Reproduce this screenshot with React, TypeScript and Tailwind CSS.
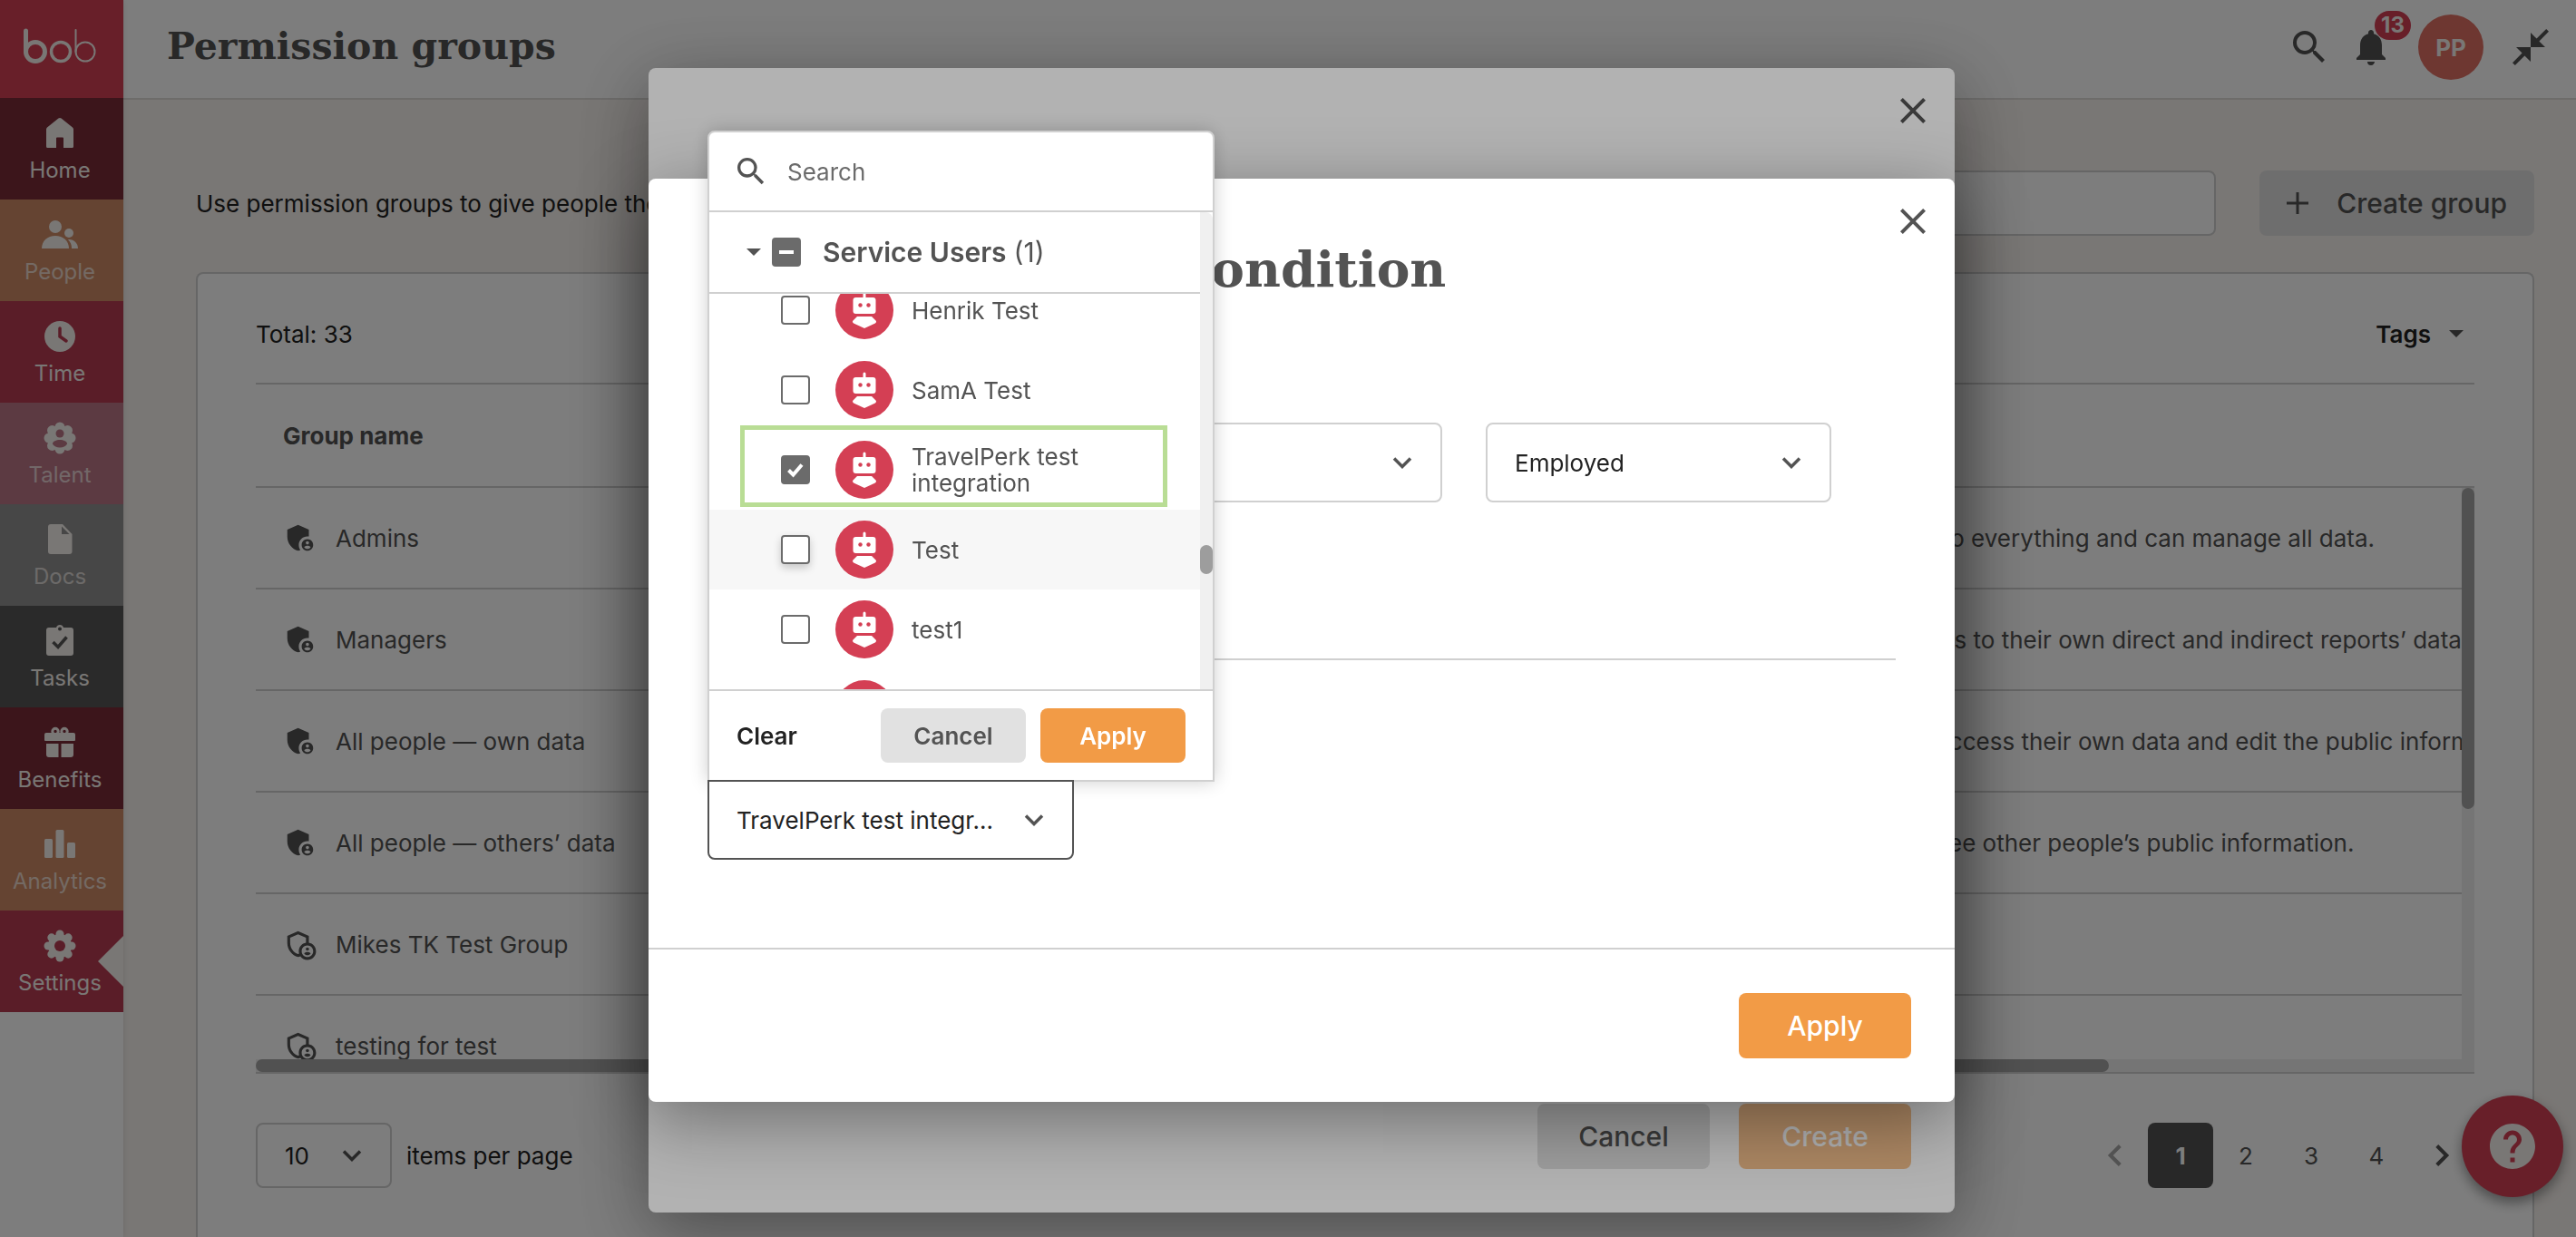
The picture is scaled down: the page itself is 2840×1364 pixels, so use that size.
import { useState } from "react";
import type { ReactNode } from "react";
import clsx from "clsx";
import {
  MdAdminPanelSettings,
  MdClose,
  MdCloseFullscreen,
  MdHelp,
  MdNotifications,
  MdOutlineAdminPanelSettings,
  MdSearch,
} from "react-icons/md";

type NavItem = {
  label: string;
  tile: string;
  muted?: boolean;
  active?: boolean;
  icon: ReactNode;
};

const petals = [0, 45, 90, 135, 180, 225, 270, 315];

const navItems: NavItem[] = [
  {
    label: "Home",
    tile: "bg-[#7a2b38]",
    icon: (
      <path d="M20 2c-.6 0-1.100.2-1.600.6L6 12.500c-.6.5-1 1.200-1 2V33.500A1.500 1.500 0 0 0 6.500 35H16V24.500a1 1 0 0 1 1-1h6a1 1 0 0 1 1 1V35h9.500a1.500 1.500 0 0 0 1.500-1.500V14.500c0-.8-.4-1.500-1-2L21.600 2.600C21.100 2.200 20.600 2 20 2z" />
    ),
  },
  {
    label: "People",
    tile: "bg-[#ce8b66]",
    muted: true,
    icon: (
      <>
        <circle cx="15" cy="10" r="7" />
        <circle cx="30" cy="17" r="5" />
        <path d="M0 34c0-8.500 6.500-14 15-14s15 5.500 15 14z" />
        <path d="M30 24c6 0 10 4.500 10 10h-7c0-4-1-7-4-9.800z" />
      </>
    ),
  },
  {
    label: "Time",
    tile: "bg-[#b83b52]",
    icon: (
      <>
        <circle cx="20" cy="19" r="17" />
        <path d="M20 10v9l7 5" fill="none" stroke="#b83b52" strokeWidth="3.500" strokeLinecap="round" />
      </>
    ),
  },
  {
    label: "Talent",
    tile: "bg-[#bc7687]",
    muted: true,
    icon: (
      <>
        <circle cx="20" cy="19" r="14" />
        {petals.map((a) => (
          <circle key={a} cx="20" cy="7" r="5.500" transform={`rotate(${a} 20 19)`} />
        ))}
        <circle cx="20" cy="14" r="4.500" fill="#bc7687" />
        <path d="M12 25.500c0-3 4-4.500 8-4.500s8 1.500 8 4.500c-1.500 2.500-4.500 4-8 4s-6.500-1.500-8-4z" fill="#bc7687" />
      </>
    ),
  },
  {
    label: "Docs",
    tile: "bg-[#919191]",
    muted: true,
    icon: (
      <>
        <path d="M10 2h13l10.500 11v19a3 3 0 0 1-3 3H10a3 3 0 0 1-3-3V5a3 3 0 0 1 3-3z" />
        <path d="M22 4.500V13h8.500z" fill="#919191" />
      </>
    ),
  },
  {
    label: "Tasks",
    tile: "bg-[#565656]",
    icon: (
      <>
        <path d="M8 4h8a4.200 4.200 0 0 1 8 0h8a3 3 0 0 1 3 3v25a3 3 0 0 1-3 3H8a3 3 0 0 1-3-3V7a3 3 0 0 1 3-3z" />
        <circle cx="20" cy="5.500" r="2" fill="#565656" />
        <path d="M12.500 20l5.500 5.500 9.500-11" fill="none" stroke="#565656" strokeWidth="3.500" />
      </>
    ),
  },
  {
    label: "Benefits",
    tile: "bg-[#7a2b38]",
    icon: (
      <>
        <path d="M5 8h30a2 2 0 0 1 2 2v6a1 1 0 0 1-1 1H4a1 1 0 0 1-1-1v-6a2 2 0 0 1 2-2z" />
        <circle cx="15" cy="6.500" r="3.200" fill="none" stroke="currentColor" strokeWidth="3" />
        <circle cx="25" cy="6.500" r="3.200" fill="none" stroke="currentColor" strokeWidth="3" />
        <path d="M5 20h13.500v15H8a3 3 0 0 1-3-3zM21.500 20H35v12a3 3 0 0 1-3 3H21.500z" />
      </>
    ),
  },
  {
    label: "Analytics",
    tile: "bg-[#ce8b66]",
    muted: true,
    icon: (
      <>
        <rect x="3" y="13" width="9" height="21" rx="1.500" />
        <rect x="15.500" y="3" width="9" height="31" rx="1.500" />
        <rect x="28" y="17" width="9" height="17" rx="1.500" />
      </>
    ),
  },
  {
    label: "Settings",
    tile: "bg-[#b83b52]",
    active: true,
    icon: (
      <>
        <circle cx="20" cy="19" r="13" />
        {petals.map((a) => (
          <rect key={a} x="15.500" y="1.500" width="9" height="12" rx="4.500" transform={`rotate(${a} 20 19)`} />
        ))}
        <circle cx="20" cy="19" r="6" fill="#b83b52" />
      </>
    ),
  },
];

const groups = [
  { name: "Admins", description: "Can do everything and can manage all data.", builtIn: true },
  { name: "Managers", description: "Access to their own direct and indirect reports’ data.", builtIn: true },
  { name: "All people — own data", description: "Can access their own data and edit the public information.", builtIn: true },
  { name: "All people — others’ data", description: "Can see other people’s public information.", builtIn: true },
  { name: "Mikes TK Test Group", description: "", builtIn: false },
  { name: "testing for test", description: "", builtIn: false },
];

const serviceUsers = [
  { id: "henrik", name: "Henrik Test" },
  { id: "sama", name: "SamA Test" },
  { id: "travelperk", name: "TravelPerk test integration" },
  { id: "test", name: "Test" },
  { id: "test1", name: "test1" },
  { id: "test2", name: "test2" },
];

function Chevron({ className = "h-6 w-6" }: { className?: string }) {
  return (
    <svg viewBox="0 0 24 24" fill="none" stroke="#535353" strokeWidth="3.500" className={className}>
      <path d="M3 7.500l9 9 9-9" />
    </svg>
  );
}

function Caret() {
  return (
    <svg viewBox="0 0 16 8" className="h-2 w-4 fill-[#535353]">
      <path d="M0 0h16L8 8z" />
    </svg>
  );
}

function Logo() {
  return (
    <svg viewBox="0 0 80 40" fill="none" stroke="currentColor" strokeLinecap="round" className="h-10 w-20" role="img" aria-label="bob">
      <path d="M2.500 4v23" strokeWidth="5" />
      <circle cx="13" cy="27" r="10.500" strokeWidth="5" />
      <circle cx="41" cy="27" r="10.500" strokeWidth="3.500" />
      <path d="M57.500 3v24" strokeWidth="2" />
      <circle cx="68" cy="27" r="10.500" strokeWidth="2" />
    </svg>
  );
}

function Sidebar() {
  return (
    <aside className="z-10 w-[136px] shrink-0 bg-white shadow-[0_0_6px_rgba(0,0,0,0.12)]">
      <a href="#home" className="flex h-[108px] items-center justify-center bg-[#d43f54] pr-1 pb-2 text-[#f7f2ee]">
        <Logo />
      </a>
      <nav>
        {navItems.map((item) => (
          <a
            key={item.label}
            href={`#${item.label.toLowerCase()}`}
            className={clsx("relative flex h-28 flex-col items-center pt-5 pr-1 text-[#f7f2ee]", item.tile)}
          >
            <svg viewBox="0 0 40 40" fill="currentColor" className="h-10 w-10">
              {item.icon}
            </svg>
            <span className={clsx("mt-1 text-2xl leading-8", item.muted && "opacity-75")}>{item.label}</span>
            {item.active && (
              <svg viewBox="0 0 28 56" className="absolute top-7 right-0 h-14 w-7 fill-[#f7f2ee]">
                <path d="M28 0v56L0 28z" />
              </svg>
            )}
          </a>
        ))}
      </nav>
    </aside>
  );
}

function Header() {
  return (
    <header className="flex h-[110px] items-center border-b-2 border-[#dedcd9] bg-white pr-[26px] pb-1 pl-12 text-[#535353]">
      <h1 className="flex-1 font-['DejaVu_Serif',serif] text-[41px] font-bold">Permission groups</h1>
      <button aria-label="Search" className="mr-5">
        <MdSearch size={48} />
      </button>
      <button aria-label="Notifications" className="relative mr-7">
        <MdNotifications size={48} />
        <span className="absolute -top-4 left-7 flex h-8 w-10 items-center justify-center rounded-full bg-[#d43f54] text-2xl font-bold text-[#f7f2ee]">
          13
        </span>
      </button>
      <button className="mr-7 h-[72px] w-[72px] rounded-full bg-[#e07064] text-[26px] font-bold text-[#f7f2ee]">PP</button>
      <button aria-label="Collapse">
        <MdCloseFullscreen size={48} />
      </button>
    </header>
  );
}

function GroupsTable() {
  return (
    <div className="relative h-[762px] overflow-hidden border-y-2 border-[#d0d0d0]">
      <table className="w-[2888px] table-fixed border-collapse text-left text-[26px] text-[#535353]">
        <thead>
          <tr className="h-[113px] border-b-2 border-[#d0d0d0]">
            <th className="w-[1760px] pl-[30px] font-bold">Group name</th>
            <th className="pl-9" aria-label="Description" />
          </tr>
        </thead>
        <tbody>
          {groups.map((group) => (
            <tr key={group.name} className="h-28 border-b-2 border-[#d0d0d0]">
              <td className="pl-[30px]">
                <div className="flex items-center gap-5">
                  {group.builtIn ? <MdAdminPanelSettings size={38} /> : <MdOutlineAdminPanelSettings size={38} />}
                  {group.name}
                </div>
              </td>
              <td className="pl-9 whitespace-nowrap">{group.description}</td>
            </tr>
          ))}
        </tbody>
      </table>
      {/* Scrollbars */}
      <div className="absolute top-[114px] right-0 bottom-0 w-[14px] bg-[#efefef]">
        <div className="h-[354px] rounded-full bg-[#a6a6a6]" />
      </div>
      <div className="absolute right-0 bottom-0 left-0 h-[14px] bg-[#efefef] pr-[14px]">
        <div className="h-full w-[84%] rounded-full bg-[#a6a6a6]" />
      </div>
    </div>
  );
}

function Pagination() {
  const cell = "flex h-[72px] w-[72px] items-center justify-center rounded-lg";
  return (
    <nav aria-label="Pages" className="flex text-[26px] text-[#535353]">
      <button aria-label="Previous page" className={clsx(cell, "opacity-50")}>
        <Chevron className="h-7 w-7 rotate-90" />
      </button>
      {[1, 2, 3, 4].map((page) => (
        <button key={page} className={clsx(cell, page === 1 && "bg-[#535353] font-bold text-white")}>
          {page}
        </button>
      ))}
      <button aria-label="Next page" className={cell}>
        <Chevron className="h-7 w-7 -rotate-90" />
      </button>
    </nav>
  );
}

function SelectField({ label, options, className }: { label: string; options: string[]; className?: string }) {
  return (
    <label className={clsx("grid items-center text-[26px] text-[#222222]", className)}>
      <span className="sr-only">{label}</span>
      <select className="col-start-1 row-start-1 h-full w-full appearance-none rounded-lg border-2 border-[#d0d0d0] bg-transparent px-[30px]">
        {options.map((option) => (
          <option key={option}>{option}</option>
        ))}
      </select>
      <Chevron className="pointer-events-none col-start-1 row-start-1 mr-8 h-6 w-6 justify-self-end" />
    </label>
  );
}

function GroupsPage() {
  return (
    <main className="flex flex-1 flex-col bg-[#f7f2ee] pt-[78px] pr-[46px] pl-20">
      <div className="flex items-center gap-12">
        <p className="flex-1 text-[26px] text-[#222222]">
          Use permission groups to give people the access they need.
        </p>
        <input
          type="search"
          aria-label="Search groups"
          className="h-[72px] w-[600px] rounded-lg border-2 border-[#d0d0d0] bg-white px-8 text-[26px]"
        />
        <button className="flex h-[72px] w-[303px] items-center justify-between rounded-lg bg-[#e1e1e1] px-[30px] text-[30px] font-medium text-[#535353]">
          <svg viewBox="0 0 24 24" fill="none" stroke="currentColor" strokeWidth="3" className="h-6 w-6">
            <path d="M12 0v24M0 12h24" />
          </svg>
          Create group
        </button>
      </div>

      <section className="mt-10 flex-1 rounded-t-lg border-2 border-b-0 border-[#d0d0d0] bg-white px-16">
        <div className="flex h-[120px] items-center justify-between pt-3 text-[26px] text-[#222222]">
          <span>Total: 33</span>
          <button className="flex items-center gap-5 pr-3 font-semibold">
            Tags
            <Caret />
          </button>
        </div>
        <GroupsTable />
        <div className="mt-[54px] flex items-center justify-between">
          <div className="flex items-center gap-4 text-[26px] text-[#222222]">
            <SelectField label="Page size" options={["10", "25", "50"]} className="h-[72px] w-[150px]" />
            items per page
          </div>
          <Pagination />
        </div>
      </section>
    </main>
  );
}

function CloseButton() {
  return (
    <button aria-label="Close" className="absolute top-[23px] right-[22px] text-[#535353]">
      <MdClose size={48} />
    </button>
  );
}

function CreateGroupModal() {
  return (
    <div className="fixed inset-0 z-20 flex justify-center bg-black/30 pt-[75px] pb-[27px] pl-[30px]">
      <div
        role="dialog"
        aria-label="Create group"
        className="relative flex w-[1440px] items-end justify-end gap-8 rounded-lg bg-white p-12 text-[30px] font-medium shadow-[0_20px_80px_rgba(0,0,0,0.4)]"
      >
        <CloseButton />
        <button className="h-[72px] w-[190px] rounded-lg bg-[#e1e1e1] text-[#535353]">Cancel</button>
        <button disabled className="h-[72px] w-[190px] rounded-lg bg-[#f29b46] text-white opacity-60">
          Create
        </button>
      </div>
    </div>
  );
}

function RobotAvatar() {
  return (
    <svg viewBox="0 0 64 64" className="h-16 w-16 shrink-0">
      <circle cx="32" cy="32" r="32" fill="#d43f54" />
      <g fill="white">
        <rect x="30.500" y="12.500" width="3" height="7" rx="1.500" />
        <rect x="19.500" y="18" width="25" height="18" rx="3" />
        <path d="M24 39h16l4.500 4.500c.9 1 .5 2.200-.6 2.900L32 52l-11.900-5.600c-1.100-.7-1.500-1.900-.6-2.900z" />
      </g>
      <circle cx="27.500" cy="26.500" r="2.200" fill="#d43f54" />
      <circle cx="36.500" cy="26.500" r="2.200" fill="#d43f54" />
    </svg>
  );
}

type CheckboxProps = {
  label?: string;
  checked: boolean;
  mixed?: boolean;
  raised?: boolean;
  onChange?: () => void;
};

function Checkbox({ label, checked, mixed, raised, onChange }: CheckboxProps) {
  return (
    <span className="grid shrink-0 place-items-center">
      <input
        type="checkbox"
        aria-label={label}
        checked={checked}
        onChange={onChange}
        className={clsx(
          "col-start-1 row-start-1 h-8 w-8 appearance-none rounded border-2 border-[#6b6b6b] bg-white checked:bg-[#6b6b6b]",
          raised && "shadow-[0_4px_10px_rgba(0,0,0,0.2)]"
        )}
      />
      {checked && (
        <svg viewBox="0 0 32 32" fill="none" stroke="white" strokeWidth="4" className="pointer-events-none col-start-1 row-start-1 h-8 w-8">
          {mixed ? <path d="M8 16h16" /> : <path d="M8.500 16.500l5 5 9.500-11" />}
        </svg>
      )}
    </span>
  );
}

function UserPicker() {
  const [selected, setSelected] = useState(["travelperk"]);

  const toggle = (id: string) => {
    setSelected((prev) => (prev.includes(id) ? prev.filter((item) => item !== id) : [...prev, id]));
  };

  return (
    <div className="absolute bottom-[86px] left-0 w-[559px] rounded-t-lg border-2 border-[#d0d0d0] bg-white shadow-[0_0_20px_rgba(0,0,0,0.2)]">
      <label className="flex h-[88px] items-center gap-5 border-b-2 border-[#d0d0d0] pl-[26px]">
        <MdSearch size={40} className="shrink-0 text-[#535353]" />
        <input placeholder="Search" className="w-full text-[26px] outline-none placeholder:text-[#6b6b6b]" />
      </label>

      <div className="flex">
        <div className="flex-1">
          <div className="flex h-[90px] items-center border-b-2 border-[#d0d0d0] pl-[41px] text-[30px] text-[#535353]">
            <Caret />
            <span className="mr-6 ml-3 flex">
              <Checkbox label="Service Users" checked={selected.length > 0} mixed onChange={() => setSelected([])} />
            </span>
            <span className="mr-2 font-semibold">Service Users</span> ({selected.length})
          </div>
          <div className="h-[436px] overflow-hidden">
            <ul className="-mt-[26px]">
              {serviceUsers.map((user) => (
                <li key={user.id} className={clsx("relative", user.id === "test" && "bg-[#f7f7f7]")}>
                  <label className="flex h-[88px] items-center pr-16 pl-[79px] text-[26px] leading-[29px] text-[#535353]">
                    <Checkbox
                      checked={selected.includes(user.id)}
                      raised={user.id === "test"}
                      onChange={() => toggle(user.id)}
                    />
                    <span className="mr-5 ml-7">
                      <RobotAvatar />
                    </span>
                    {user.name}
                  </label>
                  {user.id === "travelperk" && (
                    <div className="pointer-events-none absolute -top-[5px] right-9 bottom-[3px] left-[34px] border-5 border-[#b9dd95]" />
                  )}
                </li>
              ))}
            </ul>
          </div>
        </div>
        <div className="w-[14px] rounded-tr-lg bg-[#f0f0f0] pt-[367px]">
          <div className="h-8 rounded-full bg-[#9d9d9d]" />
        </div>
      </div>

      <div className="flex h-[100px] items-center gap-4 border-t-2 border-[#d0d0d0] pr-[30px] pl-[30px] text-[26px] font-semibold">
        <button className="mr-auto text-[#222222]">Clear</button>
        <button className="h-[60px] w-40 rounded-lg bg-[#e1e1e1] text-[#535353]">Cancel</button>
        <button className="h-[60px] w-40 rounded-lg bg-[#f29b46] text-white">Apply</button>
      </div>
    </div>
  );
}

function ConditionModal() {
  return (
    <div className="fixed inset-0 z-30 flex items-start justify-center bg-black/30 pt-[197px] pl-[30px]">
      <div role="dialog" aria-label="Condition" className="relative w-[1440px] rounded-lg bg-white shadow-[0_20px_80px_rgba(0,0,0,0.4)]">
        <CloseButton />
        <div className="px-[65px] pt-[68px] pb-[97px]">
          <h2 className="font-['DejaVu_Serif',serif] text-[55px] leading-[64px] font-bold text-[#535353]">
            Select people by condition
          </h2>
          <div className="mt-[137px] flex gap-12 border-b-2 border-[#d0d0d0] pb-[172px]">
            <SelectField label="Field" options={["Lifecycle status"]} className="h-[88px] w-[381px]" />
            <SelectField label="Operator" options={["Equals"]} className="h-[88px] w-[381px]" />
            <SelectField label="Value" options={["Employed"]} className="h-[88px] w-[381px]" />
          </div>
          <div className="relative mt-[132px]">
            <UserPicker />
            <button
              aria-expanded="true"
              className="relative flex h-[88px] w-[404px] items-center justify-between rounded-b-lg border-2 border-[#535353] bg-white pr-[30px] pl-[30px] text-[26px] text-[#222222]"
            >
              TravelPerk test integr...
              <Chevron />
            </button>
          </div>
        </div>
        <div className="flex justify-end border-t-2 border-[#d0d0d0] p-12">
          <button className="h-[72px] w-[190px] rounded-lg bg-[#f29b46] text-[30px] font-medium text-white">Apply</button>
        </div>
      </div>
    </div>
  );
}

export default function App() {
  return (
    <div className="flex h-screen overflow-hidden font-['Inter',sans-serif]">
      <Sidebar />
      <div className="flex min-w-0 flex-1 flex-col">
        <Header />
        <GroupsPage />
      </div>
      <button
        aria-label="Help"
        className="fixed right-[14px] bottom-11 flex h-28 w-28 items-center justify-center rounded-full bg-[#d43f54] text-[#f7f2ee] shadow-[0_6px_14px_rgba(0,0,0,0.4)]"
      >
        <MdHelp size={60} />
      </button>
      <CreateGroupModal />
      <ConditionModal />
    </div>
  );
}
